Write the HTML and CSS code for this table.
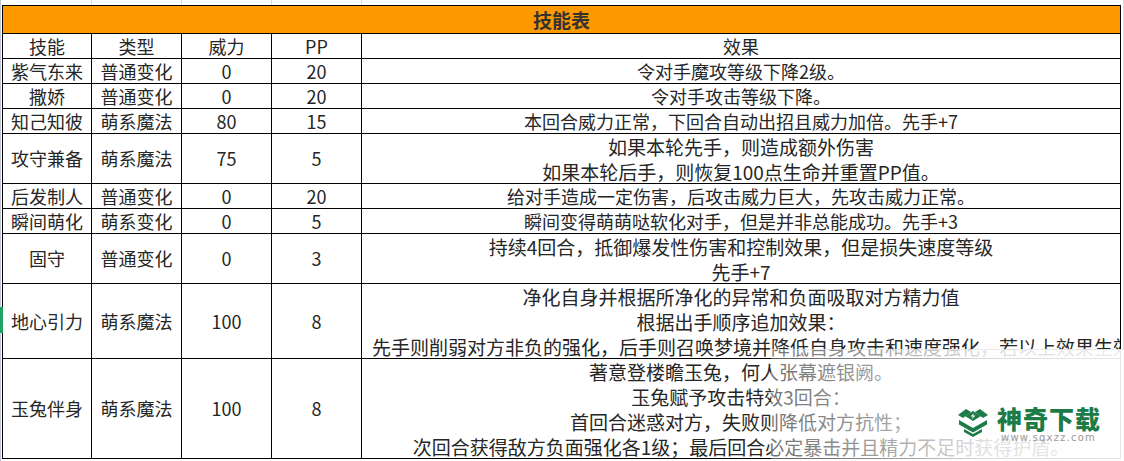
FILE: index.html
```html
<!DOCTYPE html>
<html lang="zh-CN">
<head>
<meta charset="utf-8">
<title>技能表</title>
<link rel="stylesheet" href="styles.css">
</head>
<body>
<div class="sheet">
  <div class="main">
    <div class="topstrip">
      <span class="tcol"></span><span class="tcol"></span><span class="tcol"></span><span class="tcol"></span><span class="trest"></span>
    </div>
    <div class="grid">
      <div class="title">技能表</div>

      <div class="cell">技能</div>
      <div class="cell">类型</div>
      <div class="cell">威力</div>
      <div class="cell">PP</div>
      <div class="cell">效果</div>

      <div class="cell">紫气东来</div>
      <div class="cell">普通变化</div>
      <div class="cell">0</div>
      <div class="cell">20</div>
      <div class="cell">令对手魔攻等级下降2级。</div>

      <div class="cell">撒娇</div>
      <div class="cell">普通变化</div>
      <div class="cell">0</div>
      <div class="cell">20</div>
      <div class="cell">令对手攻击等级下降。</div>

      <div class="cell">知己知彼</div>
      <div class="cell">萌系魔法</div>
      <div class="cell">80</div>
      <div class="cell">15</div>
      <div class="cell">本回合威力正常，下回合自动出招且威力加倍。先手+7</div>

      <div class="cell">攻守兼备</div>
      <div class="cell">萌系魔法</div>
      <div class="cell">75</div>
      <div class="cell">5</div>
      <div class="cell wrap"><span>如果本轮先手，则造成额外伤害</span><span>如果本轮后手，则恢复100点生命并重置PP值。</span></div>

      <div class="cell">后发制人</div>
      <div class="cell">普通变化</div>
      <div class="cell">0</div>
      <div class="cell">20</div>
      <div class="cell">给对手造成一定伤害，后攻击威力巨大，先攻击威力正常。</div>

      <div class="cell">瞬间萌化</div>
      <div class="cell">萌系变化</div>
      <div class="cell">0</div>
      <div class="cell">5</div>
      <div class="cell">瞬间变得萌萌哒软化对手，但是并非总能成功。先手+3</div>

      <div class="cell">固守</div>
      <div class="cell">普通变化</div>
      <div class="cell">0</div>
      <div class="cell">3</div>
      <div class="cell wrap"><span>持续4回合，抵御爆发性伤害和控制效果，但是损失速度等级</span><span>先手+7</span></div>

      <div class="cell">地心引力</div>
      <div class="cell">萌系魔法</div>
      <div class="cell">100</div>
      <div class="cell">8</div>
      <div class="cell wrap"><span>净化自身并根据所净化的异常和负面吸取对方精力值</span><span>根据出手顺序追加效果：</span><span class="long">先手则削弱对方非负的强化，后手则召唤梦境并降低自身攻击和速度强化，若以上效果生效则恢复精力</span></div>

      <div class="cell">玉兔伴身</div>
      <div class="cell">萌系魔法</div>
      <div class="cell">100</div>
      <div class="cell">8</div>
      <div class="cell wrap"><span>著意登楼瞻玉兔，何人张幕遮银阙。</span><span>玉兔赋予攻击特效3回合：</span><span>首回合迷惑对方，失败则降低对方抗性；</span><span>次回合获得敌方负面强化各1级；最后回合必定暴击并且精力不足时获得护盾。</span></div>
    </div>
  </div>
  <div class="rightstrip"></div>
  <div class="marker"></div>
  <div class="veil"></div>
  <div class="logo">
    <svg class="logo-icon" viewBox="0 0 32 30" width="32" height="30" aria-hidden="true">
      <polygon points="1,8 9,2 14,5 6,11" fill="#1c7b47"/>
      <polygon points="31,8 23,2 18,5 26,11" fill="#1c7b47"/>
      <polygon points="16,4 24,9 16,14 8,9" fill="#1c7b47"/>
      <polygon points="17,6 13.5,9.5 16,9.5 14.5,12.5 18.5,8.5 16,8.5" fill="#ffffff"/>
      <polygon points="2,13 16,21 30,13 30,17.5 16,25.5 2,17.5" fill="#1c7b47"/>
      <polygon points="7,22 16,27 25,22 25,25 16,30 7,25" fill="#1c7b47"/>
    </svg>
    <div class="logo-text">
      <span class="logo-name">神奇下载</span>
      <span class="logo-url">www.sqxzz.com</span>
    </div>
  </div>
</div>
</body>
</html>
```

FILE: styles.css
```css
html, body {
  margin: 0;
  padding: 0;
  background: #ffffff;
}

body {
  font-family: "Noto Sans CJK SC", "Microsoft YaHei", sans-serif;
  color: #262626;
  width: 1124px;
  height: 461px;
  overflow: hidden;
}

.sheet {
  position: relative;
  display: flex;
  align-items: flex-start;
  height: 461px;
  border-left: 1px solid #c3c9d6;
  padding-left: 1px;
  box-sizing: border-box;
}

.main {
  display: flex;
  flex-direction: column;
}

.topstrip {
  display: flex;
  height: 5px;
}

.tcol {
  width: 90px;
  box-sizing: border-box;
  border-right: 1px solid #d9d9d9;
}

.trest {
  flex: 1;
}

.grid {
  display: grid;
  grid-template-columns: 88px 89px 89px 89px 758px;
  grid-template-rows: 27px 24px 24px 24px 24px 49px 24px 24px 49px 74px 99px;
  gap: 1px;
  padding: 1px;
  background: #000000;
}

.title {
  grid-column: 1 / -1;
  background: #ff9900;
  display: flex;
  align-items: center;
  justify-content: center;
  font-size: 19px;
  font-weight: 700;
  color: #333333;
}

.cell {
  background: #ffffff;
  display: flex;
  flex-direction: column;
  align-items: center;
  justify-content: center;
  font-size: 18px;
  line-height: 25px;
  white-space: nowrap;
  overflow: hidden;
  text-align: center;
}

.cell.wrap {
  font-size: 19px;
}

.cell .long {
  align-self: flex-start;
  padding-left: 10px;
}

.rightstrip {
  margin-left: 2px;
  width: 1px;
  height: 461px;
  background: #dcdcdc;
}

.marker {
  position: absolute;
  left: -1px;
  top: 307px;
  width: 3px;
  height: 26px;
  background: #21a366;
}

.veil {
  position: absolute;
  left: 770px;
  top: 349px;
  right: 0;
  bottom: 0;
  border-top: 1px solid rgba(220, 220, 220, 0.6);
  background: linear-gradient(90deg, rgba(255,255,255,0.35) 0%, rgba(255,255,255,0.55) 30%, rgba(255,255,255,0.85) 60%, rgba(255,255,255,0.9) 100%);
}

.logo {
  position: absolute;
  left: 956px;
  top: 405px;
  display: flex;
  align-items: flex-start;
  gap: 8px;
}

.logo-icon {
  display: block;
  margin-top: 2px;
}

.logo-text {
  display: flex;
  flex-direction: column;
  align-items: flex-start;
}

.logo-name {
  font-family: "Noto Sans CJK SC", sans-serif;
  font-weight: 900;
  font-size: 25px;
  line-height: 26px;
  letter-spacing: 1px;
  color: #1c7b47;
}

.logo-url {
  font-family: "DejaVu Sans", sans-serif;
  font-size: 10px;
  line-height: 11px;
  margin-top: 1px;
  margin-left: 4px;
  letter-spacing: 1.2px;
  color: #9a9a9a;
}
```
